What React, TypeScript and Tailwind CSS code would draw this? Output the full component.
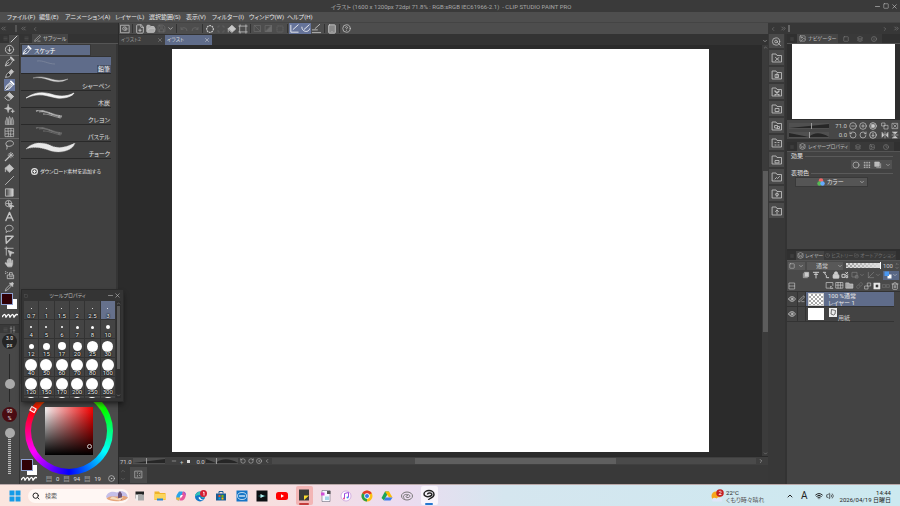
import React from "react";
import {
  ChevronDown, ChevronUp, ChevronsLeft, ChevronsRight, ChevronLeft, ChevronRight, Minus, Square, X, FolderOpen, Save, Undo, Redo,
  Scan, CircleDot, CirclePlus, CircleMinus, RotateCcw, RotateCw, Eye, Lock, Trash2,
  Search, Wifi, Volume2, Menu, Link, Image, Clock, Info, Layers, PenLine, Tablet, CircleHelp, FilePlus,
} from "lucide-react";

type Shape = { children: React.ReactNode; size?: number; fill?: string; sw?: number };
function Glyph({ children, size = 11, fill = "none", sw = 1.8 }: Shape) {
  return (
    <svg width={size} height={size} viewBox="0 0 24 24" fill={fill} stroke="currentColor" strokeWidth={sw} strokeLinecap="round" strokeLinejoin="round" aria-hidden="true">
      {children}
    </svg>
  );
}

const nib = <><path d="M3 21l3-9 8-6 5 5-6 8z" /><path d="M3 21l7-7" /><path d="M15 3l6 6" strokeWidth="4" /></>;
const tools: { name: string; icon: React.ReactNode }[][] = [
  [
    { name: "ペン", icon: <Glyph>{nib}</Glyph> },
    { name: "鉛筆", icon: <Glyph><path d="M4 20c1-7 3-8 6-10l5 5c-3 4-5 5-11 5z" fill="#333" /><path d="M11 9l5-6 5 5-6 6z" fill="currentColor" /></Glyph> },
    { name: "スケッチ", icon: <Glyph><path d="M3 21l2-8 8-7 6 6-7 7z" fill="#a9adb7" /><path d="M3 21l6-6" stroke="#444" /><path d="M15 3l6 6" strokeWidth="4" /></Glyph> },
    { name: "消しゴム", icon: <Glyph><path d="M2 14L12 4l9 8-9 8H8z" /><path d="M7 9l5-5 9 8-5 5z" fill="currentColor" /></Glyph> },
    { name: "デコレーション", icon: <Glyph fill="currentColor" sw={1}><path d="M9 3l2 7 7 2-7 2-2 7-2-7-6-2 6-2z" /><path d="M19 14l1 3 3 1-3 1-1 3-1-3-3-1 3-1z" /></Glyph> },
    { name: "色混ぜ", icon: <Glyph sw={1.2}><path d="M3 20V13c2-1 2-5 3-8 2 2 2 6 3 8v7zM9 20v-9c1-3 2-4 3-8 2 3 2 5 3 8v9zM15 20v-7c1-3 2-5 3-8 2 3 2 6 3 8v7z" fill="#777" /></Glyph> },
    { name: "ゆがみ", icon: <Glyph sw={1.5}><rect x="3" y="3" width="18" height="18" /><path d="M3 9c6 2 12-3 18 0M3 15c6-2 12 3 18 0M9 3c-2 6 3 12 0 18M15 3c2 6-3 12 0 18" /></Glyph> },
  ],
  [
    { name: "投げなわ選択", icon: <Glyph><path d="M7 16C2 12 3 5 12 4c9-1 12 8 4 11-5 2-9 1-10-1 0 4 2 4 0 8" /></Glyph> },
    { name: "自動選択", icon: <Glyph><path d="M3 21l9-9" strokeWidth="3" /><path d="M15 3v12M9 9h12M11 5l8 8M19 5l-8 8" /></Glyph> },
    { name: "塗りつぶし", icon: <Glyph><path d="M3 11l9-8 9 9-9 8z" fill="currentColor" /><path d="M3 11v8" /></Glyph> },
    { name: "直線", icon: <Glyph><path d="M3 21L21 3" /></Glyph> },
    { name: "グラデーション", icon: <Glyph><defs><linearGradient id="toolFade"><stop stopColor="#444" /><stop offset="1" stopColor="#ddd" /></linearGradient></defs><rect x="4" y="4" width="16" height="16" fill="url(#toolFade)" /></Glyph> },
  ],
  [
    { name: "コマ", icon: <Glyph><circle cx="10" cy="10" r="7" /><path d="M10 5v10M5 10h10" /><path d="M12 12l10 4-5 1-2 5z" fill="currentColor" /></Glyph> },
    { name: "テキスト", icon: <Glyph sw={2.8}><path d="M4 21l8-18 8 18M7 15h10" /></Glyph> },
    { name: "フキダシ", icon: <Glyph><path d="M8 18l-3 3v-5C1 12 3 5 12 5s12 12 0 13z" /></Glyph> },
    { name: "定規", icon: <Glyph sw={3}><path d="M4 5h16L5 20z" /></Glyph> },
    { name: "操作", icon: <Glyph><path d="M2 5h6M5 2v6M8 5h12M5 8v12" /><path d="M10 10l12 5-6 1-2 6z" fill="currentColor" /></Glyph> },
    { name: "手のひら", icon: <Glyph fill="currentColor" sw={1.2}><path d="M8 21l-6-8 2-1 3 2V6h2v6h1V3h2v9h1V4h2v9h1l1-6h2v9l-2 5z" /></Glyph> },
    { name: "エアブラシ", icon: <Glyph><path d="M8 13h13v8H8zM12 13V8h6v5" /><path d="M12 17h6" /><path d="M3 6h1M3 10h1M7 8h1" /></Glyph> },
    { name: "スポイト", icon: <Glyph><path d="M3 21l2-5 8-8 3 3-8 8z" /><path d="M13 5l6 6M15 7l3-3 2 2-3 3z" strokeWidth="3" /></Glyph> },
  ],
];

const menus = ["ファイル(F)", "編集(E)", "アニメーション(A)", "レイヤー(L)", "選択範囲(S)", "表示(V)", "フィルター(I)", "ウィンドウ(W)", "ヘルプ(H)"];

function Stroke({ kind }: { kind: number }) {
  const grain = kind === 3 || kind === 4;
  return (
    <svg width="60" height="16" viewBox="0 0 60 16" className="shrink-0" aria-hidden="true">
      {kind === 0 && <path d="M16 4c6-1 11 3 18 3" stroke="#7c869c" strokeWidth=".8" fill="none" />}
      {kind === 1 && <path d="M12 4c9-3 16 1 22 2 5 1 9 0 13-1-7 4-13 3-19 1-6-2-10-3-16-2z" fill="#dcdcdc" stroke="#bbb" strokeWidth=".4" />}
      {kind === 2 && <path d="M5 7C15 0 24 1 33 4c8 2 14 1 20-2-1 3-9 6-17 5-11-2-17-6-31 0z" fill="#f2f2f2" stroke="#f2f2f2" strokeWidth=".6" />}
      {grain && (
        <g stroke={kind === 3 ? "#c4c4c4" : "#7a7a7a"} fill="none" strokeDasharray=".8 .4">
          <path d="M15 3c9-2 14 4 26 5" strokeWidth="1.4" /><path d="M18 4c7-2 14 4 23 5" strokeDashoffset=".5" strokeWidth="1.2" /><path d="M22 6c7 0 11 3 18 4" />
        </g>
      )}
      {kind === 5 && <path d="M5 7C12-1 23 0 31 4c8 3 14 1 23-3-2 7-13 11-24 8C21 6 15 4 5 7z" fill="#e8e8e8" stroke="#bbb" strokeDasharray="1 1" strokeWidth=".6" />}
    </svg>
  );
}

const brushes = ["鉛筆", "シャーペン", "木炭", "クレヨン", "パステル", "チョーク"];

const sizes = [
  ["0.7", 1], ["1", 1], ["1.5", 1], ["2", 1], ["2.5", 1], ["3", 1],
  ["4", 2], ["5", 2], ["6", 2], ["7", 3], ["8", 3], ["10", 4],
  ["12", 5], ["15", 7], ["17", 8], ["20", 9], ["25", 11], ["30", 11],
  ["40", 12], ["50", 12], ["60", 12], ["70", 12], ["80", 12], ["100", 12],
  ["120", 12], ["150", 12], ["170", 12], ["200", 12], ["250", 12], ["300", 12],
] as [string, number][];

function Swatches() {
  return (
    <div className="grid w-[17px] grid-cols-1">
      <div className="col-start-1 row-start-1 mt-[6px] ml-[6px] size-[10px] bg-white" />
      <button aria-label="メインカラー" className="col-start-1 row-start-1 size-[12px] border border-[#8ea0d0] bg-[#300006]" />
    </div>
  );
}
function Squiggle() {
  return (
    <svg width="16" height="5" viewBox="0 0 16 5" aria-hidden="true">
      <path d="M0 4c3-4 3-3 4 0 3-4 3-3 4 0 3-4 3-3 4 0 2-3 3-3 4-2" stroke="#fff" fill="none" strokeWidth="1.4" />
    </svg>
  );
}

function ToolColumn() {
  return (
    <nav aria-label="ツール" className="flex w-[20px] shrink-0 flex-col border-r border-[#333] bg-[#484848]">
      <div className="flex h-[9px] items-center justify-between bg-[#333] pl-[3px] text-[#ccc]">
        <Menu size={5} className="text-[#666]" />
        <span className="bg-[#484848] px-px"><Glyph size={8} sw={3}><path d="M3 21L21 3" /></Glyph></span>
      </div>
      <button aria-label="クイックアクセス" className="flex h-[13px] items-center justify-center border-b border-[#666] text-[#ccc]">
        <Glyph><circle cx="12" cy="12" r="9" /><path d="M12 7v9M9 12l3 4 3-4" /></Glyph>
      </button>
      {tools.map((group, g) => (
        <div key={g} className={["grid h-[83px] auto-rows-fr border-b border-[#666]", "grid h-[60px] auto-rows-fr border-b border-[#666]", "grid h-[93px] auto-rows-fr"][g]}>
          {group.map((t) => (
            <button key={t.name} aria-label={t.name} className={t.name === "スケッチ" ? "mx-[4px] flex items-center justify-center bg-[#66749a] text-white" : "mx-[4px] flex items-center justify-center text-[#c4c4c4]"}>
              {t.icon}
            </button>
          ))}
        </div>
      ))}
      <div className="flex flex-col items-center gap-[4px] pt-px">
        <Swatches />
        <Squiggle />
      </div>
      <div className="mt-[6px] flex h-[9px] items-center justify-between border-t border-[#333] bg-[#3a3a3a] px-[3px] text-[#aaa]">
        <Menu size={5} className="text-[#666]" />
        <Glyph size={7}><path d="M7 2v20M17 2v20M4 8h6M14 15h6" /></Glyph>
      </div>
      <div className="flex flex-1 flex-col items-center pt-px">
        <div className="flex size-[15px] flex-col items-center justify-center rounded-full bg-[#242424] text-[5px] leading-[7px] text-[#eee]">
          <span>3.0</span><span>px</span>
        </div>
        <input type="range" aria-label="ブラシサイズ" defaultValue={33} className="mt-[5px] h-[48px] w-[11px] appearance-none bg-[linear-gradient(90deg,transparent_5px,#282828_5px,#282828_6px,transparent_6px)] [direction:rtl] [writing-mode:vertical-lr] [&::-webkit-slider-thumb]:size-[10px] [&::-webkit-slider-thumb]:appearance-none [&::-webkit-slider-thumb]:rounded-full [&::-webkit-slider-thumb]:bg-[#aaa]" />
        <div className="mt-[5px] flex size-[15px] flex-col items-center justify-center rounded-full bg-[#4a0c12] text-[5px] leading-[7px] text-[#eee]">
          <span>90</span><span>%</span>
        </div>
        <input type="range" aria-label="不透明度" defaultValue={100} className="mt-[6px] h-[46px] w-[11px] appearance-none bg-[repeating-linear-gradient(0deg,#bbb_0_1px,#555_1px_2px)] bg-[length:3px_40px] bg-[position:4px_6px] bg-no-repeat [direction:rtl] [writing-mode:vertical-lr] [&::-webkit-slider-thumb]:size-[10px] [&::-webkit-slider-thumb]:appearance-none [&::-webkit-slider-thumb]:rounded-full [&::-webkit-slider-thumb]:bg-[#aaa]" />
      </div>
    </nav>
  );
}

function ColorWheel() {
  return (
    <section aria-label="カラーサークル" className="relative h-[100px] shrink-0 bg-[#4b4b4b] pt-[3px] pl-[5px]">
      <div className="flex size-[88px] items-center justify-center rounded-full bg-[conic-gradient(from_300deg,red,yellow,lime,cyan,blue,magenta,red)]">
        <div className="flex size-[76px] items-center justify-center rounded-full bg-[#4b4b4b]">
          <div className="size-[48px] bg-[linear-gradient(to_top,#000,transparent),linear-gradient(to_right,#fff,#f00)]" />
        </div>
      </div>
      <div className="absolute top-[60px] left-[67px] size-[5px] rounded-full border border-[#ccc]" />
      <div className="absolute top-[23px] left-[10px] h-[5px] w-[6px] rotate-[30deg] border border-white bg-[#e33]" />
      <div className="absolute top-[75px] left-px flex flex-col gap-px">
        <Swatches />
        <Squiggle />
      </div>
      <div className="flex h-[6px] items-center justify-end gap-[4px] pr-[3px] text-[6px] text-[#ddd]">
        <span>▤</span><span>0</span><span>▤</span><span>94</span><span>▤</span><span>19</span>
        <CircleDot size={7} className="ml-[3px]" />
      </div>
    </section>
  );
}

function SubTools() {
  return (
    <div className="flex min-w-0 flex-1 flex-col">
      <div className="flex h-[9px] items-center bg-[#333] pl-[4px] text-[#ccc]">
        <Menu size={5} className="text-[#666]" />
        <div className="ml-[3px] flex h-full items-center gap-[2px] bg-[#454545] px-[2px] text-[5px] whitespace-nowrap">
          <PenLine size={7} />サブツール
        </div>
      </div>
      <div className="flex min-h-0 flex-1 border-t border-[#555] bg-[#404040]">
        <div className="flex w-[92px] flex-col px-px">
          <button className="flex h-[12px] w-[70px] items-center gap-[2px] border border-[#383838] bg-[#5f6c88] text-[6px] text-white">
            <Glyph size={10}>{nib}</Glyph>スケッチ
          </button>
          <ul className="border-t border-[#333]">
            {brushes.map((b, i) => (
              <li key={b}>
                <button className={i === 0 ? "flex h-[17px] w-full items-start justify-between border-b border-[#292929] bg-[#5f6c8a] text-white" : "flex h-[17px] w-full items-start justify-between border-b border-[#292929] text-[#e0e0e0]"}>
                  <Stroke kind={i} />
                  <span className={i === 0 ? "self-end bg-[#485064] px-px text-[6px] leading-[8px]" : "self-end px-px text-[6px] leading-[8px] whitespace-nowrap"}>{b}</span>
                </button>
              </li>
            ))}
          </ul>
          <button className="mt-[8px] ml-[10px] flex items-center gap-[2px] text-[5px] leading-[8px] whitespace-nowrap text-[#e4e4e4]">
            <CirclePlus size={7} strokeWidth={4} className="shrink-0" />ダウンロード素材を追加する
          </button>
        </div>
        <div className="ml-[4px] w-[2px] bg-[#353535]" />
      </div>
      <ColorWheel />
    </div>
  );
}

function ToolProperty() {
  return (
    <section aria-label="ツールプロパティ" className="absolute top-[289px] left-[21px] flex h-[113px] w-[103px] flex-col overflow-hidden border border-[#2a2a2a] bg-[#343434] px-[2px] shadow-md shadow-black/40">
      <header className="flex h-[11px] shrink-0 items-center text-[5px] text-[#bbb]">
        <Square size={4} className="text-[#666]" />
        <span className="flex-1 text-center">ツールプロパティ</span>
        <button aria-label="最小化"><Minus size={7} /></button>
        <button aria-label="閉じる"><X size={7} /></button>
      </header>
      <div className="flex h-[97px] shrink-0 overflow-hidden">
        <div className="grid w-[93px] grid-cols-6 content-start bg-[#444]">
          {sizes.map(([label, d]) => (
            <button key={label} className={label === "3" ? "grid h-[19px] grid-cols-1 place-items-center border-r border-b border-[#333] bg-[#66718c]" : "grid h-[19px] grid-cols-1 place-items-center border-r border-b border-[#333]"}>
              <span className="col-start-1 row-start-1 mb-[4px] rounded-full bg-white" style={{ width: d, height: d }} />
              <span className="col-start-1 row-start-1 self-end text-[6px] leading-[7px] text-[#f4f4f4] [text-shadow:0_0_1px_#000,0_0_1px_#000,0_0_2px_#000]">{label}</span>
            </button>
          ))}
          {[1, 2, 3, 4, 5, 6].map((n) => (
            <div key={n} className="flex h-[19px] justify-center border-r border-[#333] pt-px"><span className="size-[12px] rounded-full bg-white" /></div>
          ))}
        </div>
        <div className="flex w-[5px] flex-col items-center justify-between bg-[#2e2e2e] text-[#aaa]">
          <ChevronUp size={5} /><div className="mb-[24px] w-[3px] flex-1 bg-[#5a5a5a]" /><ChevronDown size={5} />
        </div>
      </div>
    </section>
  );
}

function IconBtn({ label, children, on, dim, sep }: { label: string; children: React.ReactNode; on?: boolean; dim?: boolean; sep?: boolean }) {
  const tone = on ? "flex h-full w-[11px] items-center justify-center bg-[#66749a] text-white" : dim ? "flex h-full w-[11px] items-center justify-center text-[#6b6b6b]" : "flex h-full w-[11px] items-center justify-center text-[#c8c8c8]";
  return (
    <>
      {sep && <i className="mr-px ml-[2px] h-[9px] w-px bg-[#333]" />}
      <button aria-label={label} className={tone}>{children}</button>
    </>
  );
}

function CommandBar() {
  return (
    <div className="flex h-[11px] shrink-0 items-center bg-[#4d4d4d]">
      <IconBtn label="CLIP STUDIOを開く"><Glyph size={10}><rect x="2" y="3" width="20" height="18" /><path d="M18 12c-3 5-9 4-11 1-2-4 1-6 5-6 4 1 6 4 2 6-3 1-5-2-1-3" /></Glyph></IconBtn>
      <IconBtn label="新規" sep><FilePlus size={10} /></IconBtn>
      <IconBtn label="開く"><FolderOpen size={10} fill="#aaa" /></IconBtn>
      <IconBtn label="保存" dim><Save size={9} /></IconBtn>
      <ChevronDown size={7} className="text-[#ddd]" />
      <IconBtn label="取り消し" dim sep><Undo size={8} /></IconBtn>
      <IconBtn label="やり直し" dim><Redo size={8} /></IconBtn>
      <IconBtn label="消去" sep><Glyph size={10} sw={3}><circle cx="12" cy="12" r="8" strokeDasharray="2 4" /></Glyph></IconBtn>
      <IconBtn label="選択範囲外を消去" dim><Scan size={8} /></IconBtn>
      <IconBtn label="塗りつぶし"><Glyph size={10}><path d="M3 11l9-8 9 9-9 8z" fill="currentColor" /><path d="M3 11v8" /></Glyph></IconBtn>
      <IconBtn label="拡大・縮小・回転"><Glyph size={10}><path d="M5 5h14v14H5zM2 5h3V2M19 2v3h3M2 19h3v3M19 22v-3h3" /></Glyph></IconBtn>
      <IconBtn label="選択を解除" dim sep><Glyph size={9}><path d="M4 4h16v16H4zM4 4l16 16" /></Glyph></IconBtn>
      <IconBtn label="選択範囲を反転" dim><Glyph size={9}><path d="M4 4h16v16H4z" /><path d="M20 4v16H4z" fill="currentColor" /></Glyph></IconBtn>
      <IconBtn label="選択範囲の境界線を表示" dim><Square size={8} strokeDasharray="3" /></IconBtn>
      <IconBtn label="定規にスナップ" on sep><Glyph><path d="M4 5v15h16M9 14L20 4" /></Glyph></IconBtn>
      <IconBtn label="特殊定規にスナップ" on><Glyph><path d="M4 9c0 12 16 12 17 4M9 14L20 4" /></Glyph></IconBtn>
      <IconBtn label="グリッドにスナップ"><Glyph><path d="M3 21h18M3 15h11M9 12L19 3" /></Glyph></IconBtn>
      <IconBtn label="コンパニオンモード" sep><Tablet size={10} fill="#888" /></IconBtn>
      <IconBtn label="サポート" sep><CircleHelp size={9} /></IconBtn>
    </div>
  );
}

function Workspace() {
  return (
    <main className="flex min-w-0 flex-1 flex-col border-l border-[#2a2a2a] bg-[#393939]">
      <CommandBar />
      <div className="flex h-[11px] shrink-0 items-end bg-[#333] text-[5px]">
        <button className="flex h-[10px] w-[46px] items-center justify-between bg-[#3f3f3f] px-[2px] text-[#999]">イラスト2<X size={6} /></button>
        <button className="flex h-[10px] w-[47px] items-center justify-between bg-[#5f6c8a] px-[2px] text-[#ddd]">イラスト<X size={6} /></button>
        <ChevronDown size={6} className="mb-px ml-auto text-[#ccc]" />
      </div>
      <div className="flex min-h-0 flex-1">
        <div className="flex min-w-0 flex-1 items-center justify-center bg-[#2b2b2b] py-[4px]">
          <div role="img" aria-label="キャンバス" className="aspect-[4/3] h-full bg-white" />
        </div>
        <div className="flex w-[6px] flex-col items-center bg-[#3b3b3b] text-[#aaa]">
          <ChevronUp size={5} />
          <div className="flex w-full flex-1 flex-col items-center pt-[121px]"><div className="h-[161px] w-[5px] bg-[#5c5c5c]" /></div>
          <ChevronDown size={5} />
        </div>
      </div>
      <div className="flex h-[9px] shrink-0 items-center gap-[2px] border-t border-[#2a2a2a] bg-[#3f3f3f] pl-px text-[6px] text-[#ccc]">
        <span className="w-[11px]">71.0</span>
        <Ramp wide={32} at={13} />
        <Minus size={6} className="ml-[4px]" /><span className="px-px">+</span><span className="mx-px size-[3px] bg-[#ddd]" />
        <span className="ml-[3px] w-[8px]">0.0</span>
        <Ramp wide={32} at={10} hill />
        <RotateCcw size={6} /><RotateCw size={6} /><CircleDot size={6} /><ChevronLeft size={6} />
        <div className="h-[6px] flex-1 bg-[#4a4a4a] pl-[22%]"><div className="h-full w-[59%] bg-[#5f5f5f]" /></div>
        <ChevronRight size={6} className="mr-[4px]" />
      </div>
      <div className="flex h-[19px] shrink-0 items-center gap-[4px] pl-px text-[#777]">
        <div className="flex flex-col gap-[2px]"><ChevronUp size={6} /><ChevronDown size={6} /></div>
        <button aria-label="タイムライン" className="flex h-[16px] w-[17px] items-center justify-center bg-[#4a4a4a] text-[#bbb]">
          <Glyph size={9}><rect x="3" y="3" width="18" height="18" /><path d="M9 7v2M9 14v3M14 10l3-2M14 14l3 2" /></Glyph>
        </button>
      </div>
    </main>
  );
}

function Ramp({ wide, at, hill }: { wide: number; at: number; hill?: boolean }) {
  return (
    <svg width={wide} height="6" viewBox={`0 0 ${wide} 6`} className="shrink-0" aria-hidden="true">
      <rect width={wide} height="6" fill="#505050" />
      <path d={hill ? `M0 1L${at} 5H0zM${at} 5C${at + 5} 0 ${wide - 8} 0 ${wide} 5z` : `M0 5L${wide} 1V5z`} fill="#262626" />
      <path d={`M${at + 0.5} 0v6`} stroke="#999" />
    </svg>
  );
}

const materials = ["M9 11l7 6M16 11l-7 6", "M9 11h6v6H9zM12 9v8", "M8 10l8 8M16 10l-8 8", "M9 11h7v6H9z", "M8 11h5v5H8zM14 13h3v4h-5", "M8 11h2M14 11h2M8 16h2M14 16h2", "M8 17v-4h8v4z", "M8 16l3-3 2 2 4-4", "M12 10v7M9 12l3-2 4 3-4 3z", "M12 18v-8M9 13l3-3 3 3"];
function MaterialStrip() {
  return (
    <div className="flex w-[17px] flex-col items-center gap-[2px] bg-[#383838] text-[#bbb]">
      <button aria-label="クイックアクセス" className="flex h-[14px] w-[15px] items-center justify-center bg-[#4a4a4a]"><Glyph size={11}><circle cx="11" cy="12" r="8" /><circle cx="11" cy="12" r="3" /><path d="M14 14l7 7" /></Glyph></button>
      {materials.map((d, i) => (
        <button key={d} aria-label={`素材 ${i + 1}`} className="flex size-[15px] items-center justify-center bg-[#4a4a4a]">
          <Glyph size={12} sw={1.8}><path d="M3 4h7l2 3h9v13H3z" /><path d={d} strokeWidth={i === 2 ? 3 : 1.8} /></Glyph>
        </button>
      ))}
    </div>
  );
}

function PanelTabs({ icon, title, others, tight }: { icon: React.ReactNode; title: string; others: React.ReactNode; tight?: boolean }) {
  return (
    <div className="flex h-[9px] shrink-0 items-center bg-[#303030] pl-[3px] text-[5px] text-[#bbb]">
      <Menu size={4} className="text-[#666]" />
      <div className={tight ? "ml-[2px] flex h-full items-center gap-px bg-[#454545] px-px whitespace-nowrap" : "ml-[3px] flex h-full items-center gap-[2px] bg-[#454545] px-[2px] whitespace-nowrap"}>{icon}{title}</div>
      <div className={tight ? "flex h-full items-center gap-px bg-[#393939] px-px whitespace-nowrap text-[#707070]" : "flex h-full items-center gap-[8px] bg-[#393939] px-[5px] text-[#888]"}>{others}</div>
    </div>
  );
}

function NavRow({ value, hill }: { value: string; hill?: boolean }) {
  return (
    <div className="flex h-[9px] items-center gap-[2px] pr-px text-[6px] text-[#ccc]">
      <Ramp wide={40} at={hill ? 20 : 22} hill={hill} />
      <span className="ml-auto">{value}</span>
      <button aria-label="左">{hill ? <RotateCcw size={8} /> : <CircleMinus size={8} />}</button>
      <button aria-label="右">{hill ? <RotateCw size={8} /> : <CirclePlus size={8} />}</button>
      <button aria-label="リセット"><Glyph size={8} sw={2.4}><circle cx="12" cy="12" r="10" />{hill ? <path d="M12 7v9l-3-3M12 16l3-3" /> : <rect x="8" y="8" width="8" height="8" fill="currentColor" />}</Glyph></button>
      <button aria-label="左右反転" className="ml-[2px]">{hill ? <Glyph size={8}><path d="M3 5v14l6-7zM12 3v18M21 5v14l-6-7z" fill="currentColor" /></Glyph> : <Glyph size={8}><path d="M3 3h9v9H3zM10 10h11v11H10z" /></Glyph>}</button>
      <button aria-label="上下反転">{hill ? <Glyph size={8}><path d="M5 3h14l-7 6zM3 12h18M5 21h14l-7-6z" fill="currentColor" /></Glyph> : <Glyph size={8}><path d="M4 4h16v16H4zM8 8l8 8M16 8l-8 8" /></Glyph>}</button>
    </div>
  );
}

function Rgb() {
  return <svg width="8" height="8" viewBox="0 0 16 16" className="shrink-0" aria-hidden="true"><circle cx="8" cy="5" r="4.5" fill="#e66" /><circle cx="5" cy="11" r="4.5" fill="#5b5" /><circle cx="11" cy="11" r="4.5" fill="#6af" /></svg>;
}

function Checker() {
  return <span className="h-[13px] w-[16px] border border-[#ccc] bg-[conic-gradient(#aaa_25%,#fff_0_50%,#aaa_0_75%,#fff_0)] bg-[length:4px_4px]" />;
}

function RightPanels() {
  return (
    <aside className="flex w-[113px] shrink-0 flex-col bg-[#424242]">
      <PanelTabs icon={<Image size={7} />} title="ナビゲーター" others={<><Square size={6} /><Layers size={6} /><Info size={6} /></>} />
      <div className="h-[77px] shrink-0 border-t border-[#555] bg-[#2d2d2d] px-[5px] pb-px">
        <div role="img" aria-label="ナビゲーターのプレビュー" className="h-full bg-white" />
      </div>
      <div className="shrink-0 bg-[#474747] pt-px pl-[2px]">
        <NavRow value="71.0" /><NavRow value="0.0" hill />
      </div>
      <div className="h-[3px] shrink-0 bg-[#333]" />
      <PanelTabs icon={<Layers size={7} />} title="レイヤープロパティ" others={<><Layers size={6} /><Image size={6} /><Clock size={6} /></>} />
      <section aria-label="レイヤープロパティ" className="flex h-[98px] shrink-0 flex-col border-t border-[#555] px-[4px] text-[6px] leading-[8px] text-[#e0e0e0]">
        <div className="flex items-center gap-[2px] whitespace-nowrap">効果<i className="mr-[3px] h-px flex-1 bg-[#5a5a5a]" /></div>
        <div className="mr-[4px] flex h-[9px] items-center gap-[3px] self-end bg-[#515151] px-px text-[#ccc]">
          <button aria-label="境界効果"><Glyph size={8}><circle cx="12" cy="12" r="9" /></Glyph></button>
          <button aria-label="トーン"><Glyph size={8} sw={3.4}><path d="M4 4h16M4 9h16M4 14h16M4 19h16" strokeDasharray="0 5.300" /></Glyph></button>
          <button aria-label="レイヤーカラー"><Glyph size={8}><rect x="3" y="3" width="13" height="13" fill="#bbb" /><path d="M20 8v12H8" /></Glyph></button>
          <ChevronDown size={6} />
        </div>
        <div className="flex items-center gap-[2px] whitespace-nowrap">表現色<i className="mr-[3px] h-px flex-1 bg-[#5a5a5a]" /></div>
        <label className="ml-[4px] flex h-[10px] w-[73px] items-center border border-[#393939] bg-[#555] pl-[21px]">
          <Rgb />
          <select aria-label="表現色" className="ml-[2px] min-w-0 flex-1 appearance-none text-[6px] leading-[8px]"><option>カラー</option></select>
          <ChevronDown size={6} className="mr-[2px]" />
        </label>
      </section>
      <div className="h-[2px] shrink-0 bg-[#2e2e2e]" />
      <PanelTabs tight icon={<Layers size={7} />} title="レイヤー" others={<><Clock size={5} /><span>ヒストリー</span><FolderOpen size={5} /><span>オートアクション</span></>} />
      <section aria-label="レイヤー" className="flex flex-1 flex-col bg-[#434343] text-[#ccc]">
        <div className="flex h-[10px] items-center gap-[2px] border-t border-[#555] bg-[#4a4a4a] px-px text-[6px]">
          <button aria-label="パレットカラー" className="flex h-[8px] w-[17px] items-center justify-around bg-[#585858]"><Square size={6} /><ChevronDown size={6} /></button>
          <label className="flex h-[8px] w-[36px] items-center bg-[#585858] pl-[9px]"><select aria-label="合成モード" className="min-w-0 flex-1 appearance-none text-[6px] leading-[8px]"><option>通常</option></select><ChevronDown size={6} /></label>
          <input type="range" aria-label="レイヤー不透明度" defaultValue={100} className="ml-px h-[5px] w-[35px] appearance-none bg-[linear-gradient(90deg,transparent,#ddd),conic-gradient(#999_25%,#ddd_0_50%,#999_0_75%,#ddd_0)] bg-[length:100%_100%,4px_4px] [&::-webkit-slider-thumb]:h-[7px] [&::-webkit-slider-thumb]:w-px [&::-webkit-slider-thumb]:appearance-none [&::-webkit-slider-thumb]:bg-white" />
          <span>100</span>
          <span className="flex flex-col"><ChevronUp size={4} /><ChevronDown size={4} /></span>
        </div>
        <div className="flex h-[10px] items-center justify-between bg-[#4a4a4a] pr-px pl-[15px]">
          <Glyph size={8}><rect x="8" y="4" width="12" height="13" fill="currentColor" /><path d="M4 8v12h12" /></Glyph>
          <Glyph size={8} sw={3}><path d="M4 4h16M12 4v17M7 10h10" /></Glyph>
          <Glyph size={8} sw={3}><path d="M4 4h7l-3 5 5 4v7h7" /></Glyph>
          <Lock size={8} fill="currentColor" />
          <Glyph size={8} sw={3}><path d="M4 10h8v9H4zM14 4l6 6M20 4l-6 6M16 14h4v6h-4z" /></Glyph>
          <span className="flex items-center text-[#888]"><Glyph size={8}><path d="M4 4h14v14H4zM14 14h7v7h-7z" /></Glyph><ChevronDown size={6} /></span>
          <span className="flex items-center text-[#888]"><Glyph size={8}><path d="M4 4v16h16M4 20L20 4" /></Glyph><ChevronDown size={6} /></span>
          <span className="flex h-[9px] items-center bg-[#596785] px-px"><svg width="8" height="8" viewBox="0 0 16 16"><path d="M7 7h8v8H7z" fill="#fff" /><path d="M1 1h9v9H1z" fill="#4a98f0" /></svg><ChevronDown size={6} /></span>
        </div>
        <div className="flex h-[12px] items-center justify-between border-b border-[#333] bg-[#4a4a4a] pr-px pl-px">
          <button aria-label="2ペイン表示" className="mr-[28px]"><Glyph size={8}><path d="M4 3h16v18H4zM4 12h16" /></Glyph></button>
          <button aria-label="新規ラスターレイヤー"><Glyph size={9}><path d="M21 12V4H3v15h9M16 14l5 6h-6z" /></Glyph></button>
          <button aria-label="新規ベクターレイヤー"><Glyph size={9}><path d="M3 4h18v15H3zM8 4v15M15 4v15M3 11h18" /></Glyph></button>
          <button aria-label="新規レイヤーフォルダー"><Glyph size={9}><path d="M3 5h7l2 3h9v11H3z" fill="#aaa" /></Glyph></button>
          <button aria-label="下のレイヤーに転写" className="text-[#777]"><Link size={7} /></button>
          <button aria-label="下のレイヤーと結合"><Glyph size={8}><path d="M11 3h9v9h-9zM3 12h9v9H3z" /></Glyph></button>
          <button aria-label="レイヤーマスクを作成"><Glyph size={8}><rect x="3" y="3" width="18" height="18" fill="#eee" /><circle cx="12" cy="12" r="5" fill="#333" /></Glyph></button>
          <button aria-label="マスクを適用" className="text-[#777]"><Glyph size={8}><path d="M2 8h9v8H2zM14 8h8v8h-8z" /></Glyph></button>
          <button aria-label="レイヤーを削除"><Trash2 size={8} /></button>
        </div>
        <ul className="flex flex-1 flex-col pr-[6px] text-[6px] leading-[7px]">
          <li className="flex h-[15px] items-center border-b border-[#333]">
            <Eye size={8} className="mx-px text-[#eee]" /><span className="flex h-full w-[9px] items-center justify-center border-x border-[#333]"><PenLine size={8} /></span>
            <button className="flex h-full flex-1 items-center gap-[4px] bg-[#5f6c8a] pl-[2px] text-left whitespace-nowrap text-[#e8e8e8]"><Checker /><span className="flex flex-col"><span>100 %通常</span><span>レイヤー 1</span></span></button>
          </li>
          <li className="flex h-[15px] items-center border-b border-[#333]">
            <Eye size={8} className="mx-px text-[#eee]" /><span className="h-full w-[9px] border-x border-[#333]" />
            <button className="flex h-full flex-1 items-center pl-[2px] text-left"><span className="h-[12px] w-[16px] bg-white" />
              <svg width="8" height="9" viewBox="0 0 16 18" className="mb-[3px] ml-[5px]" aria-hidden="true"><path d="M0 0h16v18H0z" fill="#eee" /><path d="M5 3l8 2-1 7-3 2-5-2z" fill="none" stroke="#444" strokeWidth="1.5" /></svg>
              <span className="mt-[6px] ml-px">用紙</span>
            </button>
          </li>
        </ul>
      </section>
    </aside>
  );
}

const apps: { name: string; art: React.ReactNode; on?: string }[] = [
  { name: "タスクビュー", art: <><path d="M3 3h17v14H3z" fill="#222" /><path d="M3 9h13v12H3z" fill="#eee" /><path d="M8 9h12v12H8z" fill="#aaa" /></> },
  { name: "エクスプローラー", art: <><path d="M1 3h9l2 3h11v14H1z" fill="#f0b429" /><path d="M1 8h22v11H1z" fill="#fcd55b" /><path d="M6 17h12v4H6z" fill="#2f86d8" /></> },
  { name: "Copilot", art: <><path d="M8 3h7l3 7h-6l-4 11C2 21 1 15 4 9z" fill="#2aa5e8" /><path d="M16 3c6 0 7 7 4 13-2 4-4 5-8 5H9l4-11z" fill="#e8579b" /><path d="M15 3c4 0 4 6 7 7-1-6-3-7-7-7z" fill="#8a53e0" /><path d="M2 15h8l-2 6c-4 0-6-2-6-6z" fill="#f5b53a" /><path d="M12 10h4l-3 5H9z" fill="#fff" /></> },
  { name: "Edge", art: <><circle cx="10" cy="13" r="10" fill="#1478c8" /><path d="M0 13C1 3 15 0 20 9c2 5-3 8-7 7 2-4-1-7-5-6-4 0-7 3-8 3z" fill="#36c2b4" /><path d="M7 15c1 5 7 7 12 4-5 1-8-1-9-5z" fill="#fff" /><circle cx="17" cy="7" r="7" fill="#d61f35" /><path d="M16 5l2-1v7" stroke="#fff" fill="none" strokeWidth="1.8" /></> },
  { name: "Microsoft Store", art: <><path d="M2 7h20v14H2z" fill="#1c5c94" /><path d="M8 7V3h8v4" fill="none" stroke="#1c5c94" strokeWidth="2" /><path d="M7 10h4v4H7z" fill="#f25022" /><path d="M13 10h4v4h-4z" fill="#7fba00" /><path d="M7 15h4v4H7z" fill="#00a4ef" /><path d="M13 15h4v4h-4z" fill="#ffb900" /></> },
  { name: "Dell", art: <><path d="M1 1h22v22H1z" fill="#1675c6" /><ellipse cx="12" cy="12" rx="9" ry="7" fill="none" stroke="#fff" strokeWidth="1.4" /><path d="M6 12h12M8 10v4M12 10v4M16 10v4" stroke="#fff" strokeWidth="1.4" /></> },
  { name: "動画編集", art: <><path d="M1 1h22v22H1z" fill="#0c0f12" /><path d="M9 8l8 4-8 4z" fill="#dff" /><path d="M5 12h14" stroke="#3cc" /></> },
  { name: "YouTube", art: <><rect x="0" y="4" width="24" height="16" rx="5" fill="#f00" /><path d="M10 8.500l6 3.500-6 3.500z" fill="#fff" /></> },
  { name: "付箋", on: "pink", art: <><path d="M2 1h20v22H2z" fill="#3b3b3b" /><path d="M12 22v-9h10z" fill="#fcdb2c" /></> },
  { name: "メモ", art: <><path d="M4 1h16v22H4z" fill="#f8f8ff" stroke="#556" /><path d="M2 5h7v6H2z" fill="#d050d8" /><path d="M14 2h7v6h-7z" fill="#555" /><path d="M10 13h8v7h-8z" fill="#a5d7e8" /></> },
  { name: "iTunes", art: <><circle cx="12" cy="12" r="10" fill="#fff" stroke="#c79bdc" strokeWidth="1.5" /><path d="M9 17V7l8-2v10" fill="none" stroke="#9c4ce0" strokeWidth="2" /><circle cx="8" cy="17" r="2" fill="#e84f94" /><circle cx="15" cy="15" r="2" fill="#3e8cf0" /></> },
  { name: "Chrome", art: <><circle cx="12" cy="12" r="11" fill="#fbc116" /><path d="M12 12L2.500 6.500A11 11 0 0 1 21.500 6.500z" fill="#e33b2e" /><path d="M12 12L2.500 6.500A11 11 0 0 0 12 23z" fill="#2c9f47" /><circle cx="12" cy="12" r="5.500" fill="#fff" /><circle cx="12" cy="12" r="4" fill="#3478e8" /></> },
  { name: "Google ドライブ", art: <><path d="M8 3h8L6 21 1 16z" fill="#1ea55a" /><path d="M8 3h8l7 12h-7z" fill="#fbbc05" /><path d="M9 15h14l-4 6H6z" fill="#3b7ded" /></> },
  { name: "CLIP STUDIO", art: <g fill="none" stroke="#777" strokeWidth="2"><ellipse cx="12" cy="12" rx="11" ry="8" /><path d="M7 17c-5-5 0-9 6-8 6 0 6 6 1 6-6 0-5-4 0-4" /></g> },
  { name: "CLIP STUDIO PAINT", on: "white", art: <g fill="none" stroke="#222" strokeWidth="3"><path d="M11 22c0-3 11-4 11-11 0-5-5-8-10-8S2 6 2 10s5 6 10 5 7-4 5-6-8-1-8 2" /></g> },
];

function Taskbar() {
  return (
    <footer className="flex h-[22px] shrink-0 items-center border-t border-[#b9a9a9] bg-[linear-gradient(90deg,#fbe6df_0%,#f7dfdf_30%,#ecdcf0_45%,#d5e6ef_56%,#cce9f0_100%)] pl-[9px] text-[#222]">
      <button aria-label="スタート"><svg width="12" height="12" viewBox="0 0 24 24"><path d="M1 1h10v10H1zM13 1h10v10H13zM1 13h10v10H1zM13 13h10v10H13z" fill="#149be8" /></svg></button>
      <label className="ml-[7px] flex h-[14px] w-[101px] items-center gap-[5px] rounded-full bg-[#fff7f4] pl-[4px]">
        <Search size={8} strokeWidth={3} className="shrink-0" />
        <input type="text" aria-label="検索" placeholder="検索" className="min-w-0 flex-1 text-[6px] leading-[10px] placeholder:text-[#555]" />
        <svg width="24" height="12" viewBox="0 0 48 24" aria-hidden="true"><path d="M2 14C4 4 15 1 24 5c10-6 22 0 21 10-2 8-35 10-43-1z" fill="#c5bfe8" /><path d="M3 17c8-6 12-3 20-4s16-3 23 2c-5 9-35 10-43 2z" fill="#e6a67a" /><path d="M26 19V7l4-5 4 6v11z" fill="#6d5376" /><path d="M10 18c3-7 8-5 15-1l12-3-7 7z" fill="#f6ddbd" /></svg>
      </label>
      <div className="ml-[4px] flex w-[305px] items-center justify-between">
        {apps.map((a) => (
          <button key={a.name} aria-label={a.name} className={a.on === "pink" ? "flex h-[19px] w-[17px] flex-col items-center justify-end gap-[2px] rounded-[2px] bg-[#f3b5b5]" : a.on === "white" ? "flex h-[19px] w-[17px] flex-col items-center justify-end gap-[2px] rounded-[2px] bg-[#f8f4fb]" : "flex h-[19px] w-[14px] items-center justify-center"}>
            <svg width="12" height="12" viewBox="0 0 24 24" aria-hidden="true">{a.art}</svg>
            {a.on && <span className={a.on === "pink" ? "h-[2px] w-[10px] rounded-full bg-[#c43c3c]" : "h-[2px] w-[8px] rounded-full bg-[#2478d0]"} />}
          </button>
        ))}
      </div>
      <div className="ml-auto flex items-center gap-[2px] text-[6px] leading-[7px]">
        <svg width="13" height="14" viewBox="0 0 26 28" aria-hidden="true"><circle cx="10" cy="14" r="9" fill="#f7a81b" /><path d="M3 25c-3-8 5-9 8-6 5-6 13-1 11 6z" fill="#dfe6f8" /><circle cx="18" cy="8" r="7.500" fill="#c42020" /><path d="M16 6c1-3 5-2 4 1l-4 4h5" fill="none" stroke="#fff" strokeWidth="1.500" /></svg>
        <div className="w-[60px] whitespace-nowrap"><div>22°C</div><div className="text-[#555]">くもり時々晴れ</div></div>
      </div>
      <ChevronUp size={8} strokeWidth={3} />
      <span className="ml-[7px] text-[10px] leading-none">A</span>
      <Wifi size={8} strokeWidth={3} className="ml-[7px]" />
      <Volume2 size={8} className="ml-[3px]" />
      <div className="mr-[9px] ml-[6px] text-right text-[6px] leading-[7px] whitespace-nowrap"><div>14:44</div><div>2026/04/19 日曜日</div></div>
    </footer>
  );
}

export default function App() {
  return (
    <div className="relative flex h-screen flex-col overflow-hidden bg-[#333] font-[Roboto,'Noto_Sans_CJK_JP',sans-serif] [font-feature-settings:'palt']">
      <header className="flex h-[12px] shrink-0 items-center bg-[#3a3a3a] pr-[2px] text-[6px] text-[#a8a8a8]">
        <span className="flex-1 pl-[28px] text-center">イラスト (1600 x 1200px 72dpi 71.8% : RGB:sRGB IEC61966-2.1)&nbsp; - CLIP STUDIO PAINT PRO</span>
        <div className="flex items-center gap-[2px] text-[#ccc]"><button aria-label="最小化"><Minus size={7} /></button><button aria-label="元に戻す"><Square size={6} /></button><button aria-label="閉じる"><X size={7} /></button></div>
      </header>
      <nav aria-label="メニュー" className="grid h-[11px] shrink-0 grid-cols-[32px_26px_50px_34px_37px_26px_37px_38px_auto] items-center justify-start border-b border-[#444] bg-[#4e4e4e] pl-[7px] text-[6px] leading-[10px] text-[#e8e8e8]">
        {menus.map((m) => <button key={m} className="text-left whitespace-nowrap">{m}</button>)}
      </nav>
      <div className="flex min-h-0 flex-1">
        <aside className="flex w-[118px] shrink-0 flex-col">
          <div className="flex h-[11px] shrink-0 items-center bg-[#373737] text-[#888]"><ChevronsLeft size={7} /><i className="ml-[8px] h-[7px] w-[2px] bg-[#555]" /><ChevronsLeft size={7} className="ml-[3px]" /><ChevronLeft size={6} className="ml-[5px]" /></div>
          <div className="flex min-h-0 flex-1"><ToolColumn /><SubTools /></div>
        </aside>
        <Workspace />
        <div className="flex w-[132px] shrink-0 flex-col bg-[#333]">
          <div className="flex h-[11px] shrink-0 items-center bg-[#373737] pl-[2px] text-[#888]"><ChevronLeft size={6} /><ChevronsRight size={7} className="ml-[4px]" /><i className="ml-px h-[7px] w-[2px] bg-[#666]" /><ChevronRight size={6} className="ml-auto" /><ChevronsRight size={7} className="ml-[5px]" /></div>
          <div className="flex min-h-0 flex-1 gap-[2px]"><MaterialStrip /><RightPanels /></div>
        </div>
      </div>
      <Taskbar />
      <ToolProperty />
    </div>
  );
}
